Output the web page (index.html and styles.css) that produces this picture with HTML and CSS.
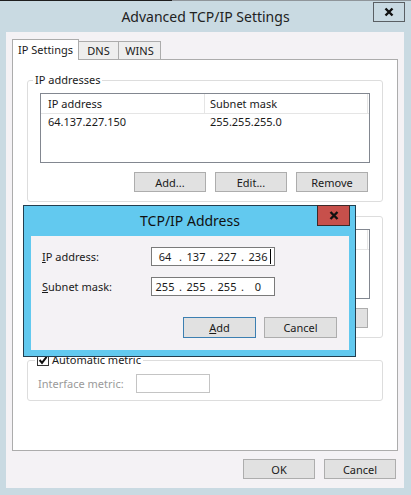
FILE: index.html
```html
<!DOCTYPE html>
<html>
<head>
    <title>Advanced TCP/IP Settings</title>
    <link rel="stylesheet" href="styles.css">
</head>
<body>
    <div class="frame">
        <div class="edge"></div>
        <div class="titlebar">
            <span class="title">Advanced TCP/IP Settings</span>
            <div class="caption-close">
                <svg width="10" height="10" viewBox="0 0 10 10"><path d="M1.5 1.5 L8.5 8.5 M8.5 1.5 L1.5 8.5" stroke="#111" stroke-width="2.4" fill="none"/></svg>
            </div>
        </div>

        <div class="client">
            <div class="tabs">
                <div class="tab active">IP Settings</div>
                <div class="tab tab-dns">DNS</div>
                <div class="tab tab-wins">WINS</div>
            </div>

            <div class="panel">
                <fieldset class="group">
                    <legend>IP addresses</legend>
                    <div class="list">
                        <div class="list-row list-head">
                            <span class="col col-1">IP address</span>
                            <span class="col col-2">Subnet mask</span>
                        </div>
                        <div class="list-row">
                            <span class="col col-1">64.137.227.150</span>
                            <span class="col">255.255.255.0</span>
                        </div>
                    </div>
                    <div class="btns">
                        <button class="btn">Add...</button>
                        <button class="btn">Edit...</button>
                        <button class="btn">Remove</button>
                    </div>
                </fieldset>

                <fieldset class="group group-gw">
                    <legend>Default gateways:</legend>
                    <div class="list">
                        <div class="list-row list-head">
                            <span class="col col-1">Gateway</span>
                            <span class="col col-2">Metric</span>
                        </div>
                    </div>
                    <div class="btns">
                        <button class="btn">Add...</button>
                        <button class="btn">Edit...</button>
                        <button class="btn">Remove</button>
                    </div>
                </fieldset>

                <fieldset class="group group-metric">
                    <legend>
                        <span class="check">
                            <svg width="12" height="12" viewBox="0 0 12 12"><rect x="0.5" y="0.5" width="11" height="11" fill="#fff" stroke="#333"/><path d="M2.6 6 L5 8.8 L9.6 2.8" stroke="#111" stroke-width="2" fill="none"/></svg>
                        </span>Automatic metric
                    </legend>
                    <div class="metric-row">
                        <span class="metric-label">Interface metric:</span>
                        <span class="field field-off"></span>
                    </div>
                </fieldset>
            </div>

            <div class="footer">
                <button class="btn">OK</button>
                <button class="btn">Cancel</button>
            </div>
        </div>

        <div class="modal">
            <div class="modal-title">TCP/IP Address</div>
            <div class="modal-close">
                <svg width="10" height="9" viewBox="0 0 10 9"><path d="M1.5 1 L8.5 8 M8.5 1 L1.5 8" stroke="#111" stroke-width="2.4" fill="none"/></svg>
            </div>
            <div class="modal-client">
                <div class="row">
                    <span class="row-label"><u>I</u>P address:</span>
                    <span class="field ip">
                        <span class="oct">64</span><span class="dot">.</span><span class="oct">137</span><span class="dot">.</span><span class="oct">227</span><span class="dot">.</span><span class="oct">236</span><span class="caret"></span>
                    </span>
                </div>
                <div class="row">
                    <span class="row-label"><u>S</u>ubnet mask:</span>
                    <span class="field ip">
                        <span class="oct">255</span><span class="dot">.</span><span class="oct">255</span><span class="dot">.</span><span class="oct">255</span><span class="dot">.</span><span class="oct">0</span>
                    </span>
                </div>
                <div class="modal-btns">
                    <button class="btn btn-default"><u>A</u>dd</button>
                    <button class="btn">Cancel</button>
                </div>
            </div>
        </div>
    </div>
</body>
</html>
```

FILE: styles.css
```css
body {
    margin: 0;
    font-family: "Noto Sans", "Liberation Sans", sans-serif;
    font-size: 11px;
    color: #1a1a1a;
}
.frame {
    position: relative;
    width: 411px;
    height: 495px;
    background: #c9dae2;
    box-sizing: border-box;
    padding: 0 7px 7px 6px;
    display: flex;
    flex-direction: column;
    overflow: hidden;
}
.edge {
    height: 1px;
    margin: 0 -7px 0 -6px;
    background: linear-gradient(to right, #1e1e1e 172px, #8f959a 172px);
}
.titlebar {
    height: 31px;
    margin: 0 -7px 0 -6px;
    position: relative;
    display: flex;
    align-items: center;
    justify-content: center;
}
.title {
    font-size: 14px;
    color: #222;
}
.caption-close {
    position: absolute;
    right: 6px;
    top: 1px;
    width: 32px;
    height: 20px;
    box-sizing: border-box;
    border: 1px solid #5a5f63;
    display: flex;
    align-items: center;
    justify-content: center;
}
.client {
    flex: 1;
    background: #f4f2f5;
    padding: 7px 6px 9px 6px;
    display: flex;
    flex-direction: column;
}
.tabs {
    display: flex;
    align-items: flex-end;
    height: 21px;
    margin-bottom: -1px;
    position: relative;
    z-index: 1;
}
.tab {
    height: 18px;
    box-sizing: border-box;
    border: 1px solid #acacac;
    border-bottom: none;
    background: #eeeeee;
    line-height: 17px;
    text-align: center;
    margin-left: -1px;
    margin-bottom: 1px;
}
.tab.active {
    width: 67px;
    height: 21px;
    line-height: 19px;
    margin-left: 0;
    margin-bottom: 0;
    background: #fff;
}
.tab-dns {
    width: 41px;
}
.tab-wins {
    width: 43px;
}
.panel {
    flex: 1;
    background: #fff;
    border: 1px solid #acacac;
    padding: 12px 14px 0;
    display: flex;
    flex-direction: column;
}
.group {
    margin: 0;
    border: 1px solid #dddddd;
    border-radius: 3px;
    padding: 5px 12px 9px;
}
.group legend {
    padding: 0 2px;
    margin-left: -7px;
    line-height: 16px;
}
.group-gw {
    margin-top: 6px;
}
.group-metric {
    margin-top: 14px;
    padding: 6px 10px 7px;
}
.group-metric legend {
    margin-left: -3px;
    display: flex;
    align-items: center;
}
.check {
    display: flex;
    margin-right: 3px;
}
.list {
    height: 70px;
    box-sizing: border-box;
    border: 1px solid #828790;
    background: #fff;
}
.list-row {
    display: flex;
    height: 17px;
    line-height: 16px;
}
.list-head {
    height: 19px;
    line-height: 19px;
    border-bottom: 1px solid #e5e5e5;
}
.col {
    padding-left: 7px;
    box-sizing: border-box;
}
.col-1 {
    width: 164px;
}
.list-head .col-1,
.list-head .col-2 {
    border-right: 1px solid #e5e5e5;
}
.list-head .col-2 {
    width: 163px;
    padding-left: 5px;
}
.list-row .col + .col {
    padding-left: 5px;
}
.btns {
    display: flex;
    justify-content: flex-end;
    gap: 9px;
    margin-top: 9px;
    padding-right: 2px;
}
.btn {
    width: 72px;
    height: 20px;
    padding: 0;
    font-family: inherit;
    font-size: 11px;
    color: #1a1a1a;
    background: #e1e1e1;
    border: 1px solid #adadad;
    border-radius: 0;
}
.metric-row {
    display: flex;
    align-items: center;
}
.metric-label {
    width: 98px;
    color: #9a9a9a;
}
.field {
    width: 74px;
    height: 19px;
    box-sizing: border-box;
    background: #fff;
    border: 1px solid #7a7a7a;
}
.field-off {
    border-color: #c4c4c4;
}
.footer {
    display: flex;
    justify-content: flex-end;
    gap: 9px;
    margin-top: 8px;
    padding-right: 2px;
}
.modal {
    position: absolute;
    left: 23px;
    top: 205px;
    width: 333px;
    height: 152px;
    box-sizing: border-box;
    border: 1px solid #233e4f;
    background: #62c9ef;
    padding: 0 6px 6px 7px;
    display: flex;
    flex-direction: column;
}
.modal-title {
    height: 30px;
    line-height: 29px;
    text-align: center;
    font-size: 14px;
    color: #111;
}
.modal-close {
    position: absolute;
    right: 5px;
    top: -1px;
    width: 33px;
    height: 21px;
    box-sizing: border-box;
    background: #c7504b;
    border: 1px solid #3b2a2a;
    display: flex;
    align-items: center;
    justify-content: center;
}
.modal-client {
    flex: 1;
    background: #f4f2f5;
    padding: 11px 12px 12px 11px;
    display: flex;
    flex-direction: column;
    gap: 11px;
}
.row {
    display: flex;
    align-items: center;
}
.row-label {
    width: 109px;
}
.field.ip {
    width: 124px;
    display: flex;
    align-items: center;
    padding-left: 1px;
    line-height: 17px;
}
.oct {
    width: 24px;
    text-align: center;
}
.dot {
    width: 7px;
    text-align: center;
}
.caret {
    width: 1px;
    height: 15px;
    background: #000;
}
.modal-btns {
    display: flex;
    justify-content: flex-end;
    gap: 8px;
    margin-top: 10px;
}
.modal-btns .btn {
    width: 73px;
    height: 21px;
}
.btn-default {
    border-color: #3c7fb1;
}
```
